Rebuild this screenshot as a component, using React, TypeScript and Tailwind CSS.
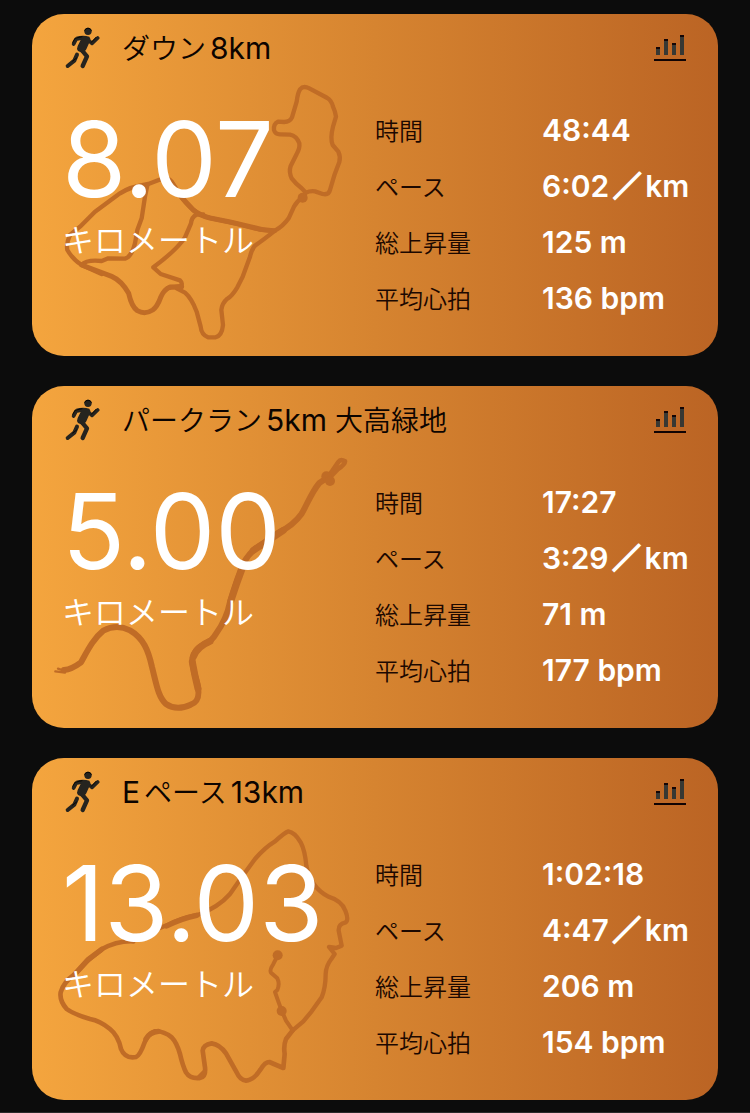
import React from "react";

type Part = { text: string; kind: "latin" | "kana" | "kanji" };

type Stroke = { d: string; width?: number };

type Activity = {
  id: string;
  title: Part[];
  distance: string;
  time: string;
  pace: string;
  climb: string;
  heartRate: string;
  route: Stroke[];
  dots: [number, number][];
};

const partStyle = {
  latin: "",
  kana: "text-[28px] font-[350]",
  kanji: "ml-1 text-[28px] font-[350]",
};

const activities: Activity[] = [
  {
    id: "down-8",
    title: [
      { text: "ダウン", kind: "kana" },
      { text: "8km", kind: "latin" },
    ],
    distance: "8.07",
    time: "48:44",
    pace: "6:02",
    climb: "125 m",
    heartRate: "136 bpm",
    route: [
      {
        d: "M818 560 L828 548 Q840 542 855 544 L878 552 Q896 556 900 540 L913 496 L928 456 Q932 440 925 425 L908 405 Q900 385 909 350 L918 320 Q916 305 909 290 Q905 272 892 264 L838 235 Q820 226 810 238 Q803 250 800 275 L786 322 Q780 335 762 336 L744 335 Q730 342 732 360 Q736 374 752 373 L780 374 Q800 378 808 400 Q810 415 800 432 L782 468 Q776 485 785 505 Q798 522 815 535 L828 548",
        width: 13,
      },
      {
        d: "M818 562 Q802 572 792 590 L776 625 Q760 648 735 662 Q700 690 676 706 Q665 718 660 740 L638 800 L622 832 Q605 860 592 866 Q576 880 574 900 L579 945 Q576 978 556 982 L534 982 Q514 974 512 950 L500 905 Q485 865 465 848 L440 835",
      },
      {
        d: "M735 662 Q715 662 690 659 L620 641 L545 625 Q510 617 490 600 Q465 580 450 555 L425 515 Q415 502 400 505 L355 522 Q300 530 270 550 L195 605 L150 650 L120 675 Q108 700 112 720 Q130 750 155 765 L215 792",
      },
      { d: "M730 662 Q700 662 670 652 L600 636 L540 624 Q510 617 490 600 L455 562 L425 518", width: 15 },
      { d: "M352 526 L345 560 L335 625 L322 660 L315 700 Q305 740 285 746 L235 745 L215 753 Q170 748 155 764" },
      { d: "M520 613 L500 614 Q485 620 483 640 L465 682 Q440 720 370 772 L392 792 L450 811 Q458 818 454 828 L430 832 Q414 830 405 842" },
      {
        d: "M155 765 L245 799 Q275 812 296 850 Q305 890 322 902 Q345 915 368 900 Q382 890 392 862 Q402 838 420 831 L455 830",
        width: 15,
      },
    ],
    dots: [[818, 563]],
  },
  {
    id: "parkrun-5",
    title: [
      { text: "パークラン", kind: "kana" },
      { text: "5km", kind: "latin" },
      { text: "大高緑地", kind: "kanji" },
    ],
    distance: "5.00",
    time: "17:27",
    pace: "3:29",
    climb: "71 m",
    heartRate: "177 bpm",
    route: [
      { d: "M84 860 L105 867 L125 855 M76 868 L105 872", width: 7 },
      {
        d: "M102 864 Q125 862 153 841 C173 805 190 770 220 746 Q260 725 300 745 C340 768 355 805 366 855 C380 910 385 945 408 966 Q440 988 482 968 C505 960 510 940 502 905 C496 880 486 860 487 830 Q492 800 525 785 Q545 778 558 755 C580 725 592 700 600 660 C615 610 625 580 640 545 Q660 505 700 485 L745 452 Q790 430 815 395 C830 370 845 330 868 303 L895 285",
        width: 18,
      },
      { d: "M640 550 L620 605 L603 655 M487 840 Q494 880 504 920 M490 825 Q500 795 540 778 M670 505 L760 445", width: 21 },
      { d: "M890 290 L908 265 L925 240 Q932 230 945 238 Q945 248 922 263 L904 282", width: 14 },
    ],
    dots: [
      [889, 283],
      [900, 297],
    ],
  },
  {
    id: "easy-13",
    title: [
      { text: "E", kind: "latin" },
      { text: "ペース", kind: "kana" },
      { text: "13km", kind: "latin" },
    ],
    distance: "13.03",
    time: "1:02:18",
    pace: "4:47",
    climb: "206 m",
    heartRate: "154 bpm",
    route: [
      {
        d: "M743 604 L729 632 Q718 648 723 656 L742 673 Q750 690 742 708 L735 714 L744 740 L755 770 L768 800 L788 829",
        width: 12,
      },
      {
        d: "M788 829 L768 855 Q760 875 764 900 L760 942 L718 924 Q705 924 692 946 Q672 978 648 980 Q630 978 620 955 L588 898 Q570 872 545 868 Q520 872 518 890 L525 940 Q528 970 510 972 Q480 975 468 955 Q458 935 450 900 Q440 865 425 850 Q400 830 375 832 Q355 838 344 865 Q330 905 318 909 Q285 915 273 885 Q265 845 240 825 Q210 800 180 795 Q130 780 110 765 Q88 740 92 715 Q100 685 135 660 L170 622 L215 586 Q260 560 310 562",
        width: 14,
      },
      {
        d: "M300 558 L410 514 Q450 493 505 482 Q565 460 600 420 L635 370 L675 315 Q705 280 735 262 Q765 235 775 232 Q795 235 812 265 Q825 290 829 335 Q835 370 855 395 Q870 415 895 428 Q935 440 946 470 Q958 500 945 506 Q925 510 926 530 L935 575 L918 582 L897 579 L914 600 L904 615 Q888 635 887 660 Q887 700 875 730 L845 772 L820 802 L788 829",
        width: 13,
      },
      { d: "M135 660 L175 616 L215 586 M410 516 Q450 495 500 484 M348 855 Q358 835 385 832 M523 955 L508 970", width: 16 },
    ],
    dots: [
      [743, 604],
      [755, 771],
    ],
  },
];

function RunnerIcon() {
  return (
    <svg viewBox="102 42 108 138" className="h-[46px] w-9 shrink-0" aria-hidden="true">
      <g fill="none" stroke="#26241f" strokeWidth="11" strokeLinecap="round" strokeLinejoin="round">
        <path d="M131 102 L138 88 L156 84 M172 88 L186 100 L203 84" />
        <path d="M154 119 L171 139 L158 168" strokeWidth="13" />
        <path d="M141 134 L133 152 L113 168" strokeWidth="12" />
      </g>
      <path
        d="M138 80 Q160 75 178 80 Q183 86 180 93 L169 118 L160 130 L144 123 Q139 116 143 108 L152 90 Z"
        fill="#26241f"
      />
      <circle cx="174" cy="64" r="11" fill="#26241f" />
      <path
        d="M164 61 A11 11 0 0 1 184 61 M128 97 L135 85 L156 80 M184 97 L198 82 M140 144 L128 153"
        fill="none"
        stroke="#080603"
        strokeWidth="3"
        strokeLinecap="round"
      />
    </svg>
  );
}

function BarsIcon() {
  return (
    <svg viewBox="0 0 32 26" className="h-[26px] w-8" aria-hidden="true">
      <path d="M4 20 V13 M12 20 V5 M20 20 V9 M28 20 V1" stroke="#383833" strokeWidth="4" />
      <path d="M4 14 V12 M12 6 V4 M20 10 V8 M28 2 V0" stroke="#140505" strokeWidth="4" />
      <path d="M0 25 H32" stroke="#100303" strokeWidth="2" />
    </svg>
  );
}

function RouteMap({ activity }: { activity: Activity }) {
  return (
    <svg
      viewBox="6 12 990 1026"
      className="pointer-events-none absolute left-0 top-0 h-full w-auto"
      aria-hidden="true"
    >
      <g fill="none" stroke="#c06c26" strokeLinecap="round" strokeLinejoin="round">
        {activity.route.map((s) => (
          <path key={s.d} d={s.d} strokeWidth={s.width ?? 13} />
        ))}
      </g>
      {activity.dots.map(([x, y]) => (
        <circle key={`${x}-${y}`} cx={x} cy={y} r="15" fill="#c06c26" />
      ))}
    </svg>
  );
}

function Stat({ label, children }: { label: string; children: React.ReactNode }) {
  return (
    <div className="grid h-14 grid-cols-[167px_1fr] items-center">
      <dt className="pt-0.5 text-2xl font-[350] text-[#1c0800]">{label}</dt>
      <dd className="whitespace-nowrap pb-0.5 text-[30px] font-semibold leading-9 text-white">{children}</dd>
    </div>
  );
}

function ActivityCard({ activity }: { activity: Activity }) {
  return (
    <article className="relative overflow-hidden rounded-[32px] bg-linear-to-r from-[#f4a53e] via-[#d68430] to-[#bb6424] px-8 pb-[29px] pt-2.5">
      <RouteMap activity={activity} />
      <header className="relative flex items-center gap-[22px]">
        <RunnerIcon />
        <h2 className="flex grow items-baseline gap-1 whitespace-nowrap pt-0.5 text-[30px] leading-9 text-[#0c0400]">
          {activity.title.map((p) => (
            <span key={p.text} className={partStyle[p.kind]}>
              {p.text}
            </span>
          ))}
        </h2>
        <button type="button" aria-label="グラフ" className="pt-0.5">
          <BarsIcon />
        </button>
      </header>
      <div className="relative mt-[33px] grid grid-cols-2">
        <div className="-ml-0.5 whitespace-nowrap text-white">
          <p className="text-[104px] leading-[112px]">{activity.distance}</p>
          <p className="text-[32px] font-[350] leading-[52px]">キロメートル</p>
        </div>
        <dl>
          <Stat label="時間">{activity.time}</Stat>
          <Stat label="ペース">
            {activity.pace}
            <span className="px-1 text-[28px] [-webkit-text-stroke:2px_white]">／</span>km
          </Stat>
          <Stat label="総上昇量">{activity.climb}</Stat>
          <Stat label="平均心拍">{activity.heartRate}</Stat>
        </dl>
      </div>
    </article>
  );
}

export default function App() {
  return (
    <main className="flex min-h-screen flex-col gap-[30px] border-b border-[#2a2a2a] bg-[#0c0c0c] px-8 pb-3 pt-3.5 font-['Inter','Noto_Sans_CJK_JP',sans-serif]">
      {activities.map((a) => (
        <ActivityCard key={a.id} activity={a} />
      ))}
    </main>
  );
}
